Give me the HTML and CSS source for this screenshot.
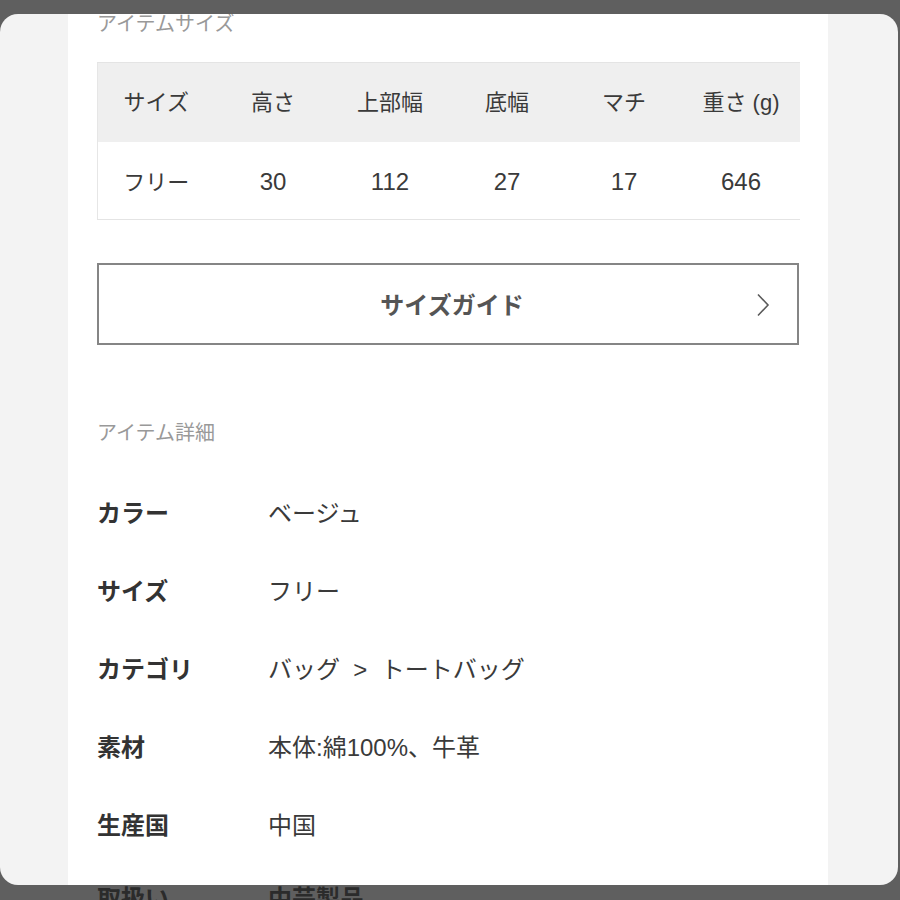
FILE: index.html
```html
<!DOCTYPE html>
<html lang="ja">
<head>
    <meta charset="UTF-8">
    <meta name="viewport" content="width=device-width, initial-scale=1.0">
    <title>アイテム詳細</title>
    <link rel="stylesheet" href="styles.css">
</head>
<body>
    <div class="frame">
        <div class="page">
            <h2 class="section-title first">アイテムサイズ</h2>
            <table class="size-table">
                <thead>
                    <tr>
                        <th>サイズ</th>
                        <th>高さ</th>
                        <th>上部幅</th>
                        <th>底幅</th>
                        <th>マチ</th>
                        <th>重さ (g)</th>
                    </tr>
                </thead>
                <tbody>
                    <tr>
                        <td>フリー</td>
                        <td class="num">30</td>
                        <td class="num">112</td>
                        <td class="num">27</td>
                        <td class="num">17</td>
                        <td class="num">646</td>
                    </tr>
                </tbody>
            </table>

            <button class="guide-btn" type="button">
                <span>サイズガイド</span>
                <svg class="chevron" width="14" height="24" viewBox="0 0 14 24">
                    <path d="M2 1.5 L12 12 L2 22.5" fill="none" stroke="#5a5a5a" stroke-width="1.6"/>
                </svg>
            </button>

            <h2 class="section-title">アイテム詳細</h2>
            <dl class="details">
                <div class="row"><dt>カラー</dt><dd>ベージュ</dd></div>
                <div class="row"><dt>サイズ</dt><dd>フリー</dd></div>
                <div class="row"><dt>カテゴリ</dt><dd>バッグ &nbsp;&gt;&nbsp; トートバッグ</dd></div>
                <div class="row"><dt>素材</dt><dd>本体:綿100%、牛革</dd></div>
                <div class="row"><dt>生産国</dt><dd>中国</dd></div>
            </dl>
        </div>
    </div>
    <div class="peek">
        <span class="peek-label">取扱い</span>
        <span>中芸製品</span>
    </div>
</body>
</html>
```

FILE: styles.css
```css
html, body {
    margin: 0;
    padding: 0;
    height: 900px;
    overflow: hidden;
}

body {
    font-family: "Liberation Sans", "Noto Sans CJK JP", sans-serif;
    background: #5f5f5f;
    color: #333;
    padding-top: 14px;
    box-sizing: border-box;
}

.frame {
    width: 898px;
    height: 871px;
    background: #f3f3f3;
    border-radius: 18px;
    overflow: hidden;
}

.page {
    display: flow-root;
    width: 760px;
    height: 100%;
    margin-left: 68px;
    padding: 0 29px;
    box-sizing: border-box;
    background: #fff;
}

.section-title {
    margin: 0;
    font-size: 20px;
    line-height: 30px;
    font-weight: normal;
    color: #999;
}

.section-title.first {
    margin-top: -5px;
    margin-bottom: -2px;
}

.size-table {
    width: 702px;
    margin-top: 25px;
    border-collapse: collapse;
    table-layout: fixed;
    font-size: 22px;
    border-left: 1px solid #e6e6e6;
    border-top: 1px solid #e4e4e4;
    border-bottom: 1px solid #e4e4e4;
}

.size-table th,
.size-table td {
    width: 117px;
    padding: 0;
    text-align: center;
    font-weight: normal;
    color: #3a3a3a;
}

.size-table th {
    height: 79px;
    padding-bottom: 4px;
    box-sizing: border-box;
    background: #efefef;
}

.size-table td {
    height: 74px;
}

.size-table td.num {
    font-size: 24px;
    padding-top: 3px;
}

.guide-btn {
    display: flex;
    align-items: center;
    justify-content: center;
    position: relative;
    width: 702px;
    height: 82px;
    margin: 43px 0 73px;
    padding: 0;
    border: 2px solid #858585;
    background: #fff;
    font-family: inherit;
    font-size: 24px;
    font-weight: bold;
    color: #555;
}

.guide-btn span {
    margin-left: 8px;
}

.chevron {
    position: absolute;
    right: 27px;
    top: 28px;
}

.details {
    margin: 25px 0 0;
}

.details .row {
    display: flex;
    align-items: center;
    height: 78px;
}

.details dt {
    width: 171px;
    font-size: 24px;
    font-weight: bold;
    color: #333;
}

.details dd {
    margin: 0;
    font-size: 24px;
    color: #3a3a3a;
}

.peek {
    display: flex;
    height: 30px;
    padding-left: 97px;
    font-size: 24px;
    line-height: 30px;
    font-weight: bold;
    color: #2b2b2b;
    margin-top: -1px;
}

.peek-label {
    width: 171px;
}
```
